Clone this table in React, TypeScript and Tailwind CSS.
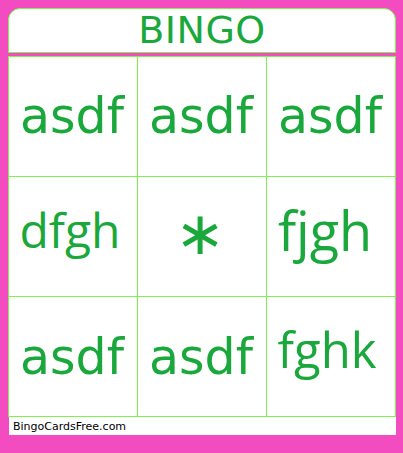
const cells = [
  { text: "asdf", font: "dejavu", shift: "-translate-x-[1px]" },
  { text: "asdf", font: "dejavu", shift: "-translate-x-[1px]" },
  { text: "asdf", font: "dejavu", shift: "-translate-x-[1px]" },
  { text: "dfgh", font: "open", shift: "-translate-x-[3px] -translate-y-[7px]" },
  { text: "∗", font: "star", shift: "-translate-x-[2px] -translate-y-[4px]" },
  { text: "fjgh", font: "openLg", shift: "-translate-x-[6px] -translate-y-[7px]" },
  { text: "asdf", font: "dejavu", shift: "-translate-x-[1px] translate-y-[1px]" },
  { text: "asdf", font: "dejavu", shift: "-translate-x-[1px] translate-y-[1px]" },
  { text: "fghk", font: "openMd", shift: "-translate-x-[4px] -translate-y-[7px]" },
];

const fontClass: Record<string, string> = {
  dejavu: "font-['DejaVu_Sans',sans-serif] text-[49px]",
  open: "font-['Open_Sans',sans-serif] text-[48px]",
  openMd: "font-['Open_Sans',sans-serif] text-[49px]",
  openLg: "font-['Open_Sans',sans-serif] text-[54px]",
  star: "font-['DejaVu_Sans',sans-serif] text-[60px]",
};

export default function App() {
  return (
    <div className="w-[403px] h-[453px] bg-[#f34cc0] pt-2 overflow-hidden">
      {/* header */}
      <div className="ml-2 w-[388px] h-[45px] bg-white border border-[#80f050] rounded-t-[12px] flex items-center justify-center">
        <span className="font-['DejaVu_Sans',sans-serif] text-[38px] tracking-[0.5px] leading-none text-[#1aa83c] -translate-y-[1px]">
          BINGO
        </span>
      </div>

      {/* grid */}
      <div className="ml-2 mt-[3px] w-[388px] grid grid-cols-3 border-l border-t border-[#80f050] bg-white">
        {cells.map((c, i) => (
          <div
            key={i}
            className="h-[120px] border-r border-b border-[#80f050] flex items-center justify-center"
          >
            <span className={`${fontClass[c.font]} ${c.shift} leading-none text-[#1aa83c]`}>
              {c.text}
            </span>
          </div>
        ))}
      </div>

      {/* footer */}
      <div className="ml-[9px] w-[387px] h-[18px] bg-white pl-1 flex items-center">
        <span className="font-['DejaVu_Sans',sans-serif] text-[11px] leading-none text-black">
          BingoCardsFree.com
        </span>
      </div>
    </div>
  );
}
